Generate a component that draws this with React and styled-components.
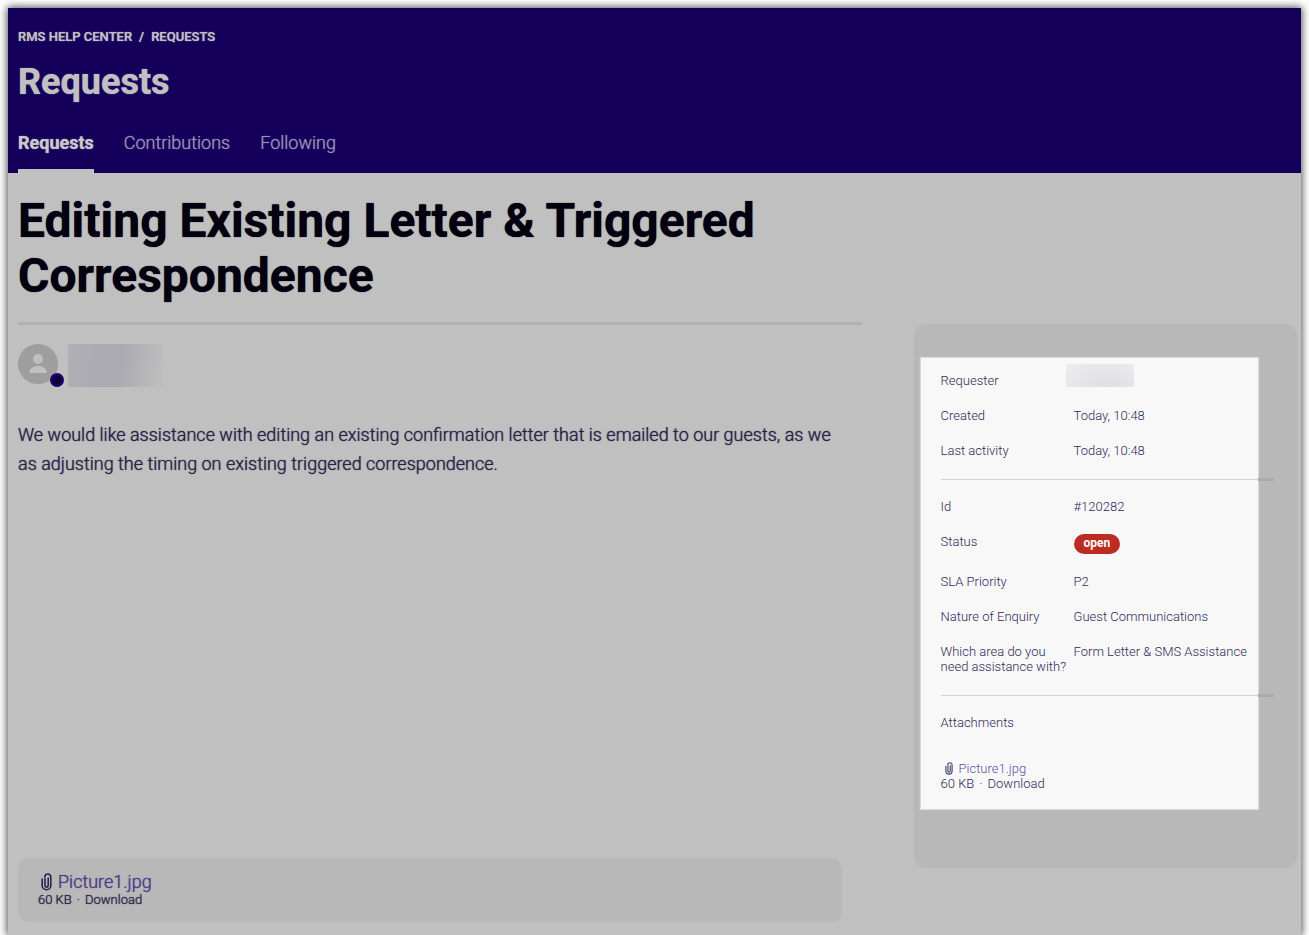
import React from 'react'
import styled, { createGlobalStyle } from 'styled-components'

const GlobalStyle = createGlobalStyle`
* {
    box-sizing: border-box;
}
body {
    margin: 0;
    background-color: #fff;
    font-family: Roboto, "Liberation Sans", sans-serif;
}
h1, h2, p, dl, dd, ul, ol {
    margin: 0;
    padding: 0;
}
a {
    color: inherit;
    text-decoration: none;
}
`

const Sheet = styled.div`
margin: 8px 8px 0;
min-height: calc(100vh - 8px);
background-color: #c0c0c0;
box-shadow: 0 0 8px 1px rgba(0, 0, 0, 0.7);
`

const Header = styled.header`
padding: 20px 10px 0;
background-color: #14005a;
color: #c0c0c0;
text-shadow: 0 0 1px currentColor;
`

const Breadcrumbs = styled.ol`
display: flex;
list-style: none;
font-size: 13px;
line-height: 18px;
font-weight: 500;
text-transform: uppercase;

    li + li::before {
        content: "/";
        margin: 0 7px;
    }
`

const SectionTitle = styled.h2`
margin-top: 12px;
font-size: 36px;
line-height: 48px;
font-weight: 700;
`

const Tabs = styled.nav`
display: flex;
gap: 30px;
margin-top: 24px;
`

const Tab = styled.a`
height: 43px;
border-bottom: 4px solid ${props => props.$active ? "#c0c0c0" : "transparent"};
color: ${props => props.$active ? "#c8c8c8" : "#9a8fb4"};
font-size: 18px;
line-height: 26px;
font-weight: ${props => props.$active ? 700 : 300};
`

const Content = styled.div`
display: grid;
grid-template-columns: 11fr 5fr;
column-gap: 52px;
align-items: start;
padding: 20px 4px 12px 10px;
`

const Main = styled.main`
color: #2a2349;
text-shadow: 0 0 1px currentColor;
`

const Title = styled.h1`
max-width: 780px;
padding-bottom: 19px;
color: #05000f;
font-size: 48px;
line-height: 55px;
font-weight: 700;
`

const TitleRule = styled.hr`
height: 3px;
margin: 0;
border: none;
background-color: #b0b0b6;
`

const Author = styled.div`
display: flex;
gap: 10px;
margin-top: 19px;
`

const Avatar = styled.div`
position: relative;
width: 40px;
height: 40px;

    svg {
        display: block;
    }
    &::after {
        content: "";
        position: absolute;
        right: -6px;
        bottom: -3px;
        width: 14px;
        height: 14px;
        border-radius: 50%;
        background: radial-gradient(#0c0036 30%, #1a006c 60%);
    }
`

const HiddenName = styled.div`
width: 95px;
height: 43px;
background: linear-gradient(100deg, #b1b0b5, #aba9b2 35%, #abaab1 55%, #b9b9bb 85%, #bebebe);
`

const Comment = styled.p`
max-width: 820px;
min-height: 438px;
margin-top: 33px;
font-size: 18px;
line-height: 29px;
font-weight: 300;
`

const AttachmentBox = styled.div`
margin-right: 20px;
padding: 13px 20px 15px;
border-radius: 10px;
background-color: #b8b8b8;
font-size: 13px;
line-height: 14px;
font-weight: 300;
`

const Sidebar = styled.aside`
margin-top: 131px;
padding: 34px 39px 59px 7px;
border-radius: 12px;
background-color: #b8b8b8;
`

const Spotlight = styled.div`
padding: 15px 6px 18px 20px;
background-color: #f8f8f8;
box-shadow: 0 0 1px 1px #d8d8d8;
color: #2f2a5a;
font-size: 13px;
line-height: 15px;
font-weight: 300;
`

const Details = styled.dl`
display: grid;
grid-template-columns: 126px 1fr;
gap: 20px 7px;
`

const HiddenValue = styled.dd`
width: 68px;
height: 23px;
margin: -9px 0 1px -8px;
background: radial-gradient(ellipse at 60% 100%, #dedde4, #ededf0);
`

// runs past the spotlight, dimmed once it is outside
const Divider = styled.hr`
position: relative;
overflow: visible;
height: 1px;
margin: 21px -6px 19px 0;
border: none;
background-color: #d1d1e0;

    &::after {
        content: "";
        position: absolute;
        top: -1px;
        left: 100%;
        width: 16px;
        height: 3px;
        background-color: #a9a9af;
    }
`

const Status = styled.span`
display: inline-block;
height: 20px;
padding: 0 10px;
border-radius: 10px;
background-color: #bd2c22;
color: #fff;
font-size: 12px;
line-height: 18px;
font-weight: 700;
vertical-align: top;
`

const SidebarFile = styled.div`
margin-top: 31px;
`

const FileLine = styled.div`
display: flex;
align-items: center;
gap: 6px;
padding-left: ${props => props.$large ? 3 : 4}px;
font-size: ${props => props.$large ? 18 : 13}px;
line-height: ${props => props.$large ? 22 : 15}px;

    a {
        color: ${props => props.$large ? "#4f3a85" : "#6250a0"};
    }
`

const Dot = styled.span`
margin: 0 5px;
`

const PersonIcon = () => (
    <svg width="40" height="40" viewBox="0 0 40 40" aria-hidden="true">
        <circle cx="20" cy="20" r="20" fill="#9e9e9e" />
        <circle cx="20" cy="15" r="5" fill="#c0c0c0" />
        <path d="M11 29c1-5 4-7 9-7s8 2 9 7z" fill="#c0c0c0" />
    </svg>
)

const ClipIcon = ({ large }) => (
    <svg width={large ? 11 : 8} height={large ? 18 : 13} viewBox="0 0 11 18" fill="none" aria-hidden="true">
        <path
            d="M4 5.5v7a1.6 1.6 0 0 0 3.2 0V5M1.2 6v6.5a4.3 4.3 0 0 0 8.6 0V4a3 3 0 0 0-6 0"
            stroke={large ? "#2a2349" : "#4a4370"}
            strokeWidth="1.6"
            strokeLinecap="round"
        />
    </svg>
)

const File = ({ large }) => (
    <div>
        <FileLine $large={large}>
            <ClipIcon large={large} />
            <a href="#picture">Picture1.jpg</a>
        </FileLine>
        <div>60 KB<Dot>·</Dot><a href="#download">Download</a></div>
    </div>
)

const tabs = ["Requests", "Contributions", "Following"]

const requestFields = [
    { label: "Id", value: "#120282" },
    { label: "Status", value: <Status>open</Status> },
    { label: "SLA Priority", value: "P2" },
    { label: "Nature of Enquiry", value: "Guest Communications" },
    { label: "Which area do you need assistance with?", value: "Form Letter & SMS Assistance" },
]

class App extends React.Component {

    state = {
        activeTab: "Requests",
    }

    selectTab = (tab) => {
        this.setState({ activeTab: tab })
    }

    render() {

        const tabList = tabs.map((tab) => (
            <Tab
                key={tab}
                href={"#" + tab}
                $active={tab === this.state.activeTab}
                onClick={() => this.selectTab(tab)}
            >
                {tab}
            </Tab>
        ))

        const fieldList = requestFields.map((field) => (
            <React.Fragment key={field.label}>
                <dt>{field.label}</dt>
                <dd>{field.value}</dd>
            </React.Fragment>
        ))

        return (
            <Sheet>
                <GlobalStyle />
                <Header>
                    <Breadcrumbs>
                        <li><a href="#home">RMS Help Center</a></li>
                        <li><a href="#requests">Requests</a></li>
                    </Breadcrumbs>
                    <SectionTitle>Requests</SectionTitle>
                    <Tabs>{tabList}</Tabs>
                </Header>
                <Content>
                    <Main>
                        <Title>Editing Existing Letter &amp; Triggered Correspondence</Title>
                        <TitleRule />
                        <Author>
                            <Avatar><PersonIcon /></Avatar>
                            <HiddenName />
                        </Author>
                        <Comment>
                            We would like assistance with editing an existing confirmation letter that is emailed to our guests, as we as adjusting the timing on existing triggered correspondence.
                        </Comment>
                        <AttachmentBox><File large /></AttachmentBox>
                    </Main>
                    <Sidebar>
                        <Spotlight>
                            <Details>
                                <dt>Requester</dt>
                                <HiddenValue />
                                <dt>Created</dt>
                                <dd>Today, 10:48</dd>
                                <dt>Last activity</dt>
                                <dd>Today, 10:48</dd>
                            </Details>
                            <Divider />
                            <Details>{fieldList}</Details>
                            <Divider />
                            <div>Attachments</div>
                            <SidebarFile><File /></SidebarFile>
                        </Spotlight>
                    </Sidebar>
                </Content>
            </Sheet>
        )
    }
}

export default App
